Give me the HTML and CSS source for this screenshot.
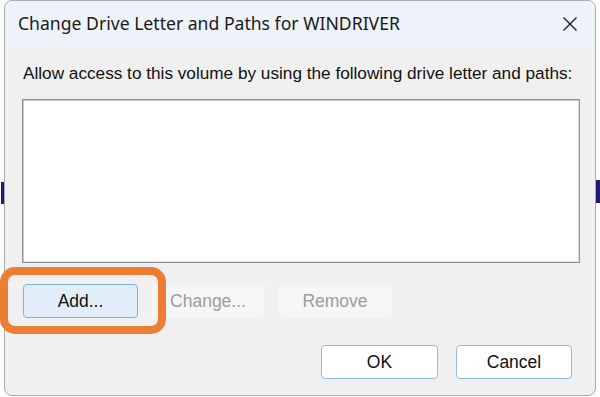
FILE: index.html
```html
<!DOCTYPE html>
<html lang="en">
<head>
<meta charset="utf-8">
<title>Change Drive Letter and Paths for WINDRIVER</title>
<link rel="stylesheet" href="styles.css">
</head>
<body>
<div class="desktop">
  <div class="behind behind-left"></div>
  <div class="behind behind-right"></div>
  <div class="dialog">
    <div class="titlebar">
      <span class="title">Change Drive Letter and Paths for WINDRIVER</span>
      <span class="close" aria-label="Close">
        <svg width="16" height="16" viewBox="0 0 16 16"><path d="M1.5 1.5 L14.5 14.5 M14.5 1.5 L1.5 14.5" stroke="#1c1c1c" stroke-width="1.4" fill="none"/></svg>
      </span>
    </div>
    <div class="content">
      <div class="label">Allow access to this volume by using the following drive letter and paths:</div>
      <div class="listbox"></div>
      <div class="actions">
        <div class="highlight"><button class="btn btn-focus">Add...</button></div>
        <button class="btn btn-disabled">Change...</button>
        <button class="btn btn-disabled">Remove</button>
      </div>
      <div class="footer">
        <button class="btn btn-default">OK</button>
        <button class="btn btn-default">Cancel</button>
      </div>
    </div>
  </div>
</div>
</body>
</html>
```

FILE: styles.css
```css
html, body {
  margin: 0;
  padding: 0;
  background: #ffffff;
  width: 600px;
  height: 397px;
  overflow: hidden;
}

.desktop {
  position: relative;
  width: 600px;
  height: 397px;
  padding: 0 4px 0 4px;
  box-sizing: border-box;
}

.behind {
  position: absolute;
  width: 3px;
  background: #1b1b78;
}
.behind-left { left: 1px; top: 182px; height: 22px; }
.behind-right { right: 0; top: 180px; height: 23px; width: 4px; }

.dialog {
  position: relative;
  width: 592px;
  height: 396px;
  box-sizing: border-box;
  border: 1px solid #a9abae;
  border-radius: 8px;
  background: #f0f0f0;
  display: flex;
  flex-direction: column;
  overflow: visible;
}

.titlebar {
  height: 46px;
  flex: none;
  background: #eef3f9;
  border-radius: 8px 8px 0 0;
  display: flex;
  align-items: center;
  justify-content: space-between;
  padding: 0 17px 0 13px;
}

.title {
  font-family: "Noto Sans", "Open Sans", sans-serif;
  font-size: 17.6px;
  color: #1a1a1a;
  position: relative;
  top: -1px;
}

.close {
  display: flex;
  width: 16px;
  height: 16px;
  position: relative;
  top: 0;
}

.content {
  flex: 1;
  padding: 16px 23px 0 17px;
  font-family: "Liberation Sans", Arial, sans-serif;
  display: flex;
  flex-direction: column;
}

.label {
  font-size: 17.2px;
  line-height: 21px;
  color: #111;
  padding-left: 1px;
  white-space: nowrap;
}

.listbox {
  margin-top: 15px;
  height: 164px;
  box-sizing: border-box;
  width: 558px;
  background: #ffffff;
  border: 1px solid #8f9296;
  box-shadow: inset 1px 1px 0 #c4c7ca, inset -1px -1px 0 #e2e3e4;
}

.actions {
  margin-top: 21px;
  display: flex;
  gap: 13px;
  padding-left: 1px;
}

.highlight {
  position: relative;
  display: flex;
}
.highlight::after {
  content: "";
  position: absolute;
  left: -23px;
  top: -17px;
  right: -28px;
  bottom: -16px;
  border: 8px solid #ed7d31;
  border-radius: 15px;
  pointer-events: none;
}

.btn {
  width: 115px;
  height: 34px;
  box-sizing: border-box;
  border-radius: 4px;
  font-family: "Liberation Sans", Arial, sans-serif;
  font-size: 17.5px;
  padding: 0;
  margin: 0;
}

.btn-focus {
  background: #e1eefa;
  border: 1px solid #79b2e4;
  color: #111;
}

.btn-disabled {
  width: 114px;
  background: #f6f6f6;
  border: 1px solid #f3f3f3;
  color: #9c9c9c;
}

.footer {
  margin-top: 27px;
  display: flex;
  justify-content: flex-end;
  gap: 18px;
}

.btn-default {
  width: 117px;
  background: #ffffff;
  border: 1.5px solid #8cbce8;
  color: #111;
}
.btn-default + .btn-default { width: 116px; }
```
